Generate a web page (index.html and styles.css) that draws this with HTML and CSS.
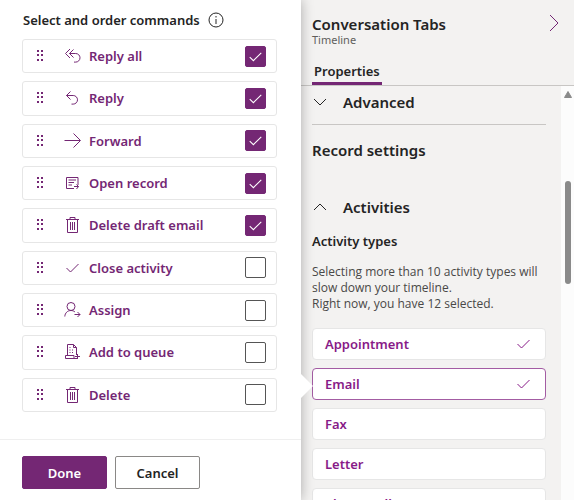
FILE: index.html
```
<!DOCTYPE html>
<html lang="en">
<head>
<meta charset="utf-8">
<meta name="viewport" content="width=device-width, initial-scale=1">
<title>Conversation Tabs</title>
<link rel="stylesheet" href="styles.css">
</head>
<body>
<svg class="sprite" aria-hidden="true">
  <symbol id="grip" viewBox="0 0 8 12"><path d="M0 0h2v2H0zM4 0h2v2H4zM0 4h2v2H0zM4 4h2v2H4zM0 9h2v2H0zM4 9h2v2H4z" fill="currentColor" stroke="none"/></symbol>
  <symbol id="reply-all" viewBox="0 0 18 18"><path d="M6 2 1.500 6.500 6 11M9.500 2.500 5.500 6.500l4 4M5.500 6.500h6.200a4.300 4.300 0 0 1 0 8.600H10"/></symbol>
  <symbol id="reply" viewBox="0 0 18 18"><path d="M6.500 2.500 2.500 6.500l4 4M2.500 6.500h6.700a4.300 4.300 0 0 1 0 8.600H7.500"/></symbol>
  <symbol id="forward" viewBox="0 0 18 18"><path d="M.5 8.500h15.500M9.500 1.500l7 7-7 7"/></symbol>
  <symbol id="open" viewBox="0 0 18 18"><path d="M10 14.500H2.500v-11h11.500V11M4.500 6h7.500M4.500 8.500h5.500M4.500 11H8M10 12.500h4.500M12.500 10.500l2 2-2 2.500"/></symbol>
  <symbol id="trash" viewBox="0 0 18 18"><path d="M2 3.500h13M6 3.500v-2h5v2M3.500 3.500v13h10v-13M6.500 6v8M8.500 6v8M10.500 6v8"/></symbol>
  <symbol id="check" viewBox="0 0 18 18"><path d="m2.500 9 4 4 8-8"/></symbol>
  <symbol id="assign" viewBox="0 0 18 18"><circle cx="7" cy="5.500" r="4"/><path d="M.8 15.500C1 12 3.500 9.500 7 9.500c1.500 0 3 .6 4 1.500M10.500 13.500H16M13.500 11l2.500 2.500-2.500 2.500"/></symbol>
  <symbol id="queue" viewBox="0 0 18 18"><path d="M3.500 12.500v-11h6l3 3V9M9.500 1.500v3h3M12.500 9v3M3 12.500h7v3H1.500v-3zM10 15.500h3M13.500 11v5M11 13.500h5"/><path d="M5.500 4.500h1M5.500 7h1M5.500 9.500h1M8 7h1M8 9.500h1"/></symbol>
  <symbol id="tick" viewBox="0 0 20 20"><path d="m4.500 10.500 3.500 3.500 7.500-7.500"/></symbol>
</svg>
<div class="app">
  <main class="flyout">
    <header class="flyout-head">
      <h1 id="commands-title">Select and order commands</h1>
      <svg class="info" viewBox="0 0 16 16" role="img" aria-label="Information"><circle cx="8" cy="8" r="7"/><path d="M8 7v5M8 4v1.500"/></svg>
    </header>
    <div class="commands" role="group" aria-labelledby="commands-title">
      <label class="command"><svg class="grip"><use href="#grip"/></svg><svg class="icon"><use href="#reply-all"/></svg><span class="name">Reply all</span><span class="box"><input type="checkbox" checked><svg><use href="#tick"/></svg></span></label>
      <label class="command"><svg class="grip"><use href="#grip"/></svg><svg class="icon"><use href="#reply"/></svg><span class="name">Reply</span><span class="box"><input type="checkbox" checked><svg><use href="#tick"/></svg></span></label>
      <label class="command"><svg class="grip"><use href="#grip"/></svg><svg class="icon"><use href="#forward"/></svg><span class="name">Forward</span><span class="box"><input type="checkbox" checked><svg><use href="#tick"/></svg></span></label>
      <label class="command"><svg class="grip"><use href="#grip"/></svg><svg class="icon"><use href="#open"/></svg><span class="name">Open record</span><span class="box"><input type="checkbox" checked><svg><use href="#tick"/></svg></span></label>
      <label class="command"><svg class="grip"><use href="#grip"/></svg><svg class="icon"><use href="#trash"/></svg><span class="name">Delete draft email</span><span class="box"><input type="checkbox" checked><svg><use href="#tick"/></svg></span></label>
      <label class="command"><svg class="grip"><use href="#grip"/></svg><svg class="icon"><use href="#check"/></svg><span class="name">Close activity</span><span class="box"><input type="checkbox"><svg><use href="#tick"/></svg></span></label>
      <label class="command"><svg class="grip"><use href="#grip"/></svg><svg class="icon"><use href="#assign"/></svg><span class="name">Assign</span><span class="box"><input type="checkbox"><svg><use href="#tick"/></svg></span></label>
      <label class="command"><svg class="grip"><use href="#grip"/></svg><svg class="icon"><use href="#queue"/></svg><span class="name">Add to queue</span><span class="box"><input type="checkbox"><svg><use href="#tick"/></svg></span></label>
      <label class="command"><svg class="grip"><use href="#grip"/></svg><svg class="icon"><use href="#trash"/></svg><span class="name">Delete</span><span class="box"><input type="checkbox"><svg><use href="#tick"/></svg></span></label>
    </div>
    <footer class="actions">
      <button class="btn primary" type="button">Done</button>
      <button class="btn" type="button">Cancel</button>
    </footer>
  </main>
  <aside class="panel">
    <header class="panel-head">
      <div>
        <h2>Conversation Tabs</h2>
        <p class="subtitle">Timeline</p>
      </div>
      <button class="collapse" type="button" aria-label="Collapse panel"><svg viewBox="0 0 10 18"><path d="m1 1 8 8-8 8"/></svg></button>
    </header>
    <nav class="tabs"><a class="tab" href="#properties" aria-current="page">Properties</a></nav>
    <div class="scroll">
      <div class="content" id="properties">
        <button class="section first" type="button" aria-expanded="false"><svg viewBox="0 0 14 8"><path d="m1 1 6 6 6-6"/></svg>Advanced</button>
        <h3 class="group-title">Record settings</h3>
        <button class="section" type="button" aria-expanded="true"><svg viewBox="0 0 14 8"><path d="m1 7 6-6 6 6"/></svg>Activities</button>
        <h4 class="types-title">Activity types</h4>
        <p class="note">Selecting more than 10 activity types will slow down your timeline.<br>Right now, you have 12 selected.</p>
        <div class="types">
          <button class="type" type="button">Appointment<svg><use href="#check"/></svg></button>
          <button class="type active" type="button">Email<svg><use href="#check"/></svg></button>
          <button class="type" type="button">Fax</button>
          <button class="type" type="button">Letter</button>
          <button class="type" type="button">Phone Call<svg><use href="#check"/></svg></button>
        </div>
      </div>
      <div class="track">
        <svg viewBox="0 0 8 7"><path d="M4 0.500 7.500 6.500h-7z"/></svg>
        <div class="thumb"></div>
      </div>
    </div>
  </aside>
</div>
</body>
</html>
```

FILE: styles.css
```
:root {
  --purple: #742774;
  --ink: #242424;
  --edge: #e6e6e6;
}
* { box-sizing: border-box; }
body {
  margin: 0;
  font-family: "Noto Sans", "Open Sans", sans-serif;
  font-size: 13px;
  line-height: 20px;
  color: var(--ink);
}
h1, h2, h3, h4, p { margin: 0; font-weight: 600; }
button { font: inherit; color: inherit; cursor: pointer; }
svg { fill: none; stroke: currentColor; flex: none; }
.sprite { display: none; }

.app {
  display: grid;
  grid-template-columns: 301fr 273fr;
  height: 100vh;
  overflow: hidden;
}

.flyout {
  position: relative;
  z-index: 1;
  display: flex;
  flex-direction: column;
  min-width: 0;
  background: #fff;
  box-shadow: 0 0 12px rgba(0, 0, 0, .3);
}
.flyout::after {
  content: "";
  position: absolute;
  left: 100%;
  top: 374px;
  border: 12px solid transparent;
  border-left-color: #fff;
  border-right-width: 0;
}
.flyout-head {
  display: flex;
  align-items: center;
  gap: 8px;
  padding: 10px 23px 8px;
}
h1 { font-size: 13px; line-height: 20px; }
.info { width: 16px; height: 16px; }

.commands {
  flex: 1;
  display: flex;
  flex-direction: column;
  gap: 8px;
  padding: 1px 24px 27px 22px;
}
.command {
  flex: 1;
  display: flex;
  align-items: center;
  padding: 0 10px 0 14px;
  border: 1px solid var(--edge);
  border-radius: 3px;
  color: var(--purple);
  font-weight: 600;
}
.grip { width: 8px; height: 12px; margin-right: 19px; }
.icon { width: 18px; height: 18px; margin-right: 7px; }
.name { flex: 1; }
.box { display: grid; color: #fff; }
.box > * { grid-area: 1 / 1; width: 21px; height: 21px; margin: 0; }
.box input {
  appearance: none;
  border: 1px solid #555;
  border-radius: 2px;
  background: #fff;
}
.box input:checked { background: var(--purple); border-color: var(--purple); }
.box svg { pointer-events: none; }

.actions {
  display: flex;
  gap: 8px;
  padding: 16px 22px 11px;
  border-top: 1px solid #efefef;
}
.btn {
  width: 85px;
  height: 33px;
  padding: 0;
  border: 1px solid #8a8886;
  border-radius: 2px;
  background: #fff;
  font-weight: 600;
}
.primary { background: var(--purple); border-color: var(--purple); color: #fff; }

.panel {
  display: flex;
  flex-direction: column;
  min-width: 0;
  min-height: 0;
  background: #f3f2f1;
}
.panel-head {
  display: flex;
  justify-content: space-between;
  align-items: flex-start;
  padding: 14px 15px 0 11px;
}
h2 { font-size: 15px; line-height: 20px; }
.subtitle { font-size: 11px; line-height: 12px; font-weight: 400; color: #605e5c; }
.collapse { display: grid; padding: 0; border: 0; background: none; color: var(--purple); }
.collapse svg { width: 10px; height: 18px; }
.tabs {
  display: flex;
  padding: 15px 11px 0;
  border-bottom: 1px solid #c8c6c4;
}
.tab {
  padding: 0 2px 1px;
  border-bottom: 3px solid var(--purple);
  color: var(--ink);
  font-weight: 600;
  text-decoration: none;
}
.scroll { flex: 1; display: flex; min-height: 0; }
.content { flex: 1; min-width: 0; padding: 0 15px 0 11px; overflow: hidden; }
.section {
  display: flex;
  align-items: center;
  gap: 16px;
  width: 100%;
  padding: 0 1px;
  border: 0;
  background: none;
  font-size: 15px;
  line-height: 20px;
  font-weight: 600;
}
.section svg { width: 14px; height: 8px; }
.first { padding: 6px 1px 12px; border-bottom: 1px solid #c8c6c4; }
.group-title { padding: 15px 0 37px; font-size: 15px; line-height: 20px; }
.types-title { padding: 14px 0 13px; font-size: 13px; line-height: 20px; }
.note { padding-bottom: 16px; font-family: "Open Sans", "Noto Sans", sans-serif; font-size: 12px; line-height: 16px; font-weight: 400; color: #494847; }
.types { display: grid; gap: 8px; }
.type {
  display: flex;
  justify-content: space-between;
  align-items: center;
  height: 32px;
  padding: 0 12px;
  border: 1px solid var(--edge);
  border-radius: 4px;
  background: #fff;
  color: #881a88;
  font-weight: 600;
}
.type svg { width: 18px; height: 18px; }
.active { border-color: #a35ca3; }
.track {
  display: flex;
  flex-direction: column;
  align-items: center;
  width: 13px;
  padding-top: 5px;
  background: #fcfcfc;
  color: #8a8a8a;
}
.track svg { width: 8px; height: 7px; fill: currentColor; }
.thumb { width: 6px; height: 22vh; max-height: 103px; margin-top: 83px; border-radius: 3px; background: #8a8a8a; }
```
